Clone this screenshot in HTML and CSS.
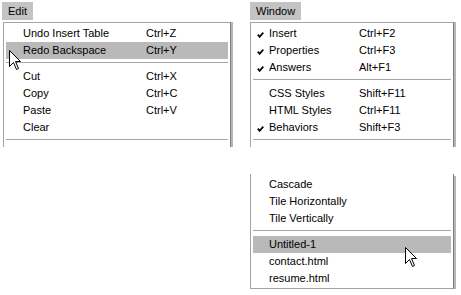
FILE: index.html
```html
<!DOCTYPE html>
<html lang="en">
<head>
    <meta charset="UTF-8">
    <title>Edit and Window menus</title>
    <link rel="stylesheet" href="styles.css">
</head>
<body>
    <div class="menu-column edit-column">
        <div class="menu-tab">Edit</div>
        <div class="menu edit-menu cut-off">
            <div class="item"><span>Undo Insert Table</span><span>Ctrl+Z</span></div>
            <div class="item active">
                <span>Redo Backspace</span><span>Ctrl+Y</span>
                <svg class="pointer edit-pointer" width="14" height="22" viewBox="0 0 14 22">
                    <path d="M0.5 0.5 L0.5 16.5 L4.5 12.5 L7.5 19.5 L9.5 18.5 L6.5 11.5 L11.5 11.5 Z" fill="#fff" stroke="#000" stroke-width="1"/>
                </svg>
            </div>
            <div class="separator"></div>
            <div class="item"><span>Cut</span><span>Ctrl+X</span></div>
            <div class="item"><span>Copy</span><span>Ctrl+C</span></div>
            <div class="item"><span>Paste</span><span>Ctrl+V</span></div>
            <div class="item"><span>Clear</span><span></span></div>
            <div class="separator"></div>
        </div>
    </div>

    <div class="menu-column window-column">
        <div class="menu-tab">Window</div>
        <div class="menu window-menu cut-off">
            <div class="item">
                <svg class="check" width="7" height="6" viewBox="0 0 7 6"><path d="M0.8 2.6 L2.6 4.8 L6.3 0.6" fill="none" stroke="#000" stroke-width="1.7"/></svg>
                <span>Insert</span><span>Ctrl+F2</span>
            </div>
            <div class="item">
                <svg class="check" width="7" height="6" viewBox="0 0 7 6"><path d="M0.8 2.6 L2.6 4.8 L6.3 0.6" fill="none" stroke="#000" stroke-width="1.7"/></svg>
                <span>Properties</span><span>Ctrl+F3</span>
            </div>
            <div class="item">
                <svg class="check" width="7" height="6" viewBox="0 0 7 6"><path d="M0.8 2.6 L2.6 4.8 L6.3 0.6" fill="none" stroke="#000" stroke-width="1.7"/></svg>
                <span>Answers</span><span>Alt+F1</span>
            </div>
            <div class="separator"></div>
            <div class="item"><span>CSS Styles</span><span>Shift+F11</span></div>
            <div class="item"><span>HTML Styles</span><span>Ctrl+F11</span></div>
            <div class="item">
                <svg class="check" width="7" height="6" viewBox="0 0 7 6"><path d="M0.8 2.6 L2.6 4.8 L6.3 0.6" fill="none" stroke="#000" stroke-width="1.7"/></svg>
                <span>Behaviors</span><span>Shift+F3</span>
            </div>
            <div class="separator"></div>
        </div>

        <div class="menu window-menu cut-top">
            <div class="item"><span>Cascade</span><span></span></div>
            <div class="item"><span>Tile Horizontally</span><span></span></div>
            <div class="item"><span>Tile Vertically</span><span></span></div>
            <div class="separator"></div>
            <div class="item active">
                <span>Untitled-1</span><span></span>
                <svg class="pointer window-pointer" width="14" height="22" viewBox="0 0 14 22">
                    <path d="M0.5 0.5 L0.5 16.5 L4.5 12.5 L7.5 19.5 L9.5 18.5 L6.5 11.5 L11.5 11.5 Z" fill="#fff" stroke="#000" stroke-width="1"/>
                </svg>
            </div>
            <div class="item"><span>contact.html</span><span></span></div>
            <div class="item"><span>resume.html</span><span></span></div>
        </div>
    </div>
</body>
</html>
```
FILE: styles.css
```css
body {
    margin: 0;
    padding: 2px 0 0 2px;
    background: #fff;
    color: #000;
    font-family: "Liberation Sans", Arial, sans-serif;
    font-size: 11px;
    display: flex;
    align-items: flex-start;
}

.edit-column {
    width: 248px;
}

.window-column {
    width: 206px;
}

.menu-tab {
    display: inline-block;
    height: 18px;
    line-height: 18px;
    padding: 0 6px;
    background: #c3c3c3;
}

.menu {
    margin-top: 2px;
    padding: 2px;
    border: 1px solid #a4a4a4;
    border-right-color: #7c7c7c;
    background: #fff;
    box-shadow: 2px 2px 0 #b6b6b6;
}

.edit-menu {
    margin-left: 1px;
    width: 228px;
    box-sizing: border-box;
}

.window-menu {
    width: 204px;
    box-sizing: border-box;
}

.cut-off {
    border-bottom: none;
    box-shadow: 2px 0 0 #b6b6b6;
}

.cut-top {
    margin-top: 27px;
    border-top: none;
    padding-bottom: 1px;
}

.item {
    position: relative;
    display: grid;
    height: 17px;
    line-height: 17px;
    padding-left: 17px;
    white-space: nowrap;
}

.edit-menu .item {
    grid-template-columns: 123px 1fr;
}

.window-menu .item {
    grid-template-columns: 90px 1fr;
    padding-left: 16px;
}

.item.active {
    background: #b9b9b9;
}

.check {
    position: absolute;
    left: 4px;
    top: 7px;
}

.separator {
    height: 1px;
    margin: 3px 0 5px;
    background: #a6a6a6;
}

.pointer {
    position: absolute;
    pointer-events: none;
}

.edit-pointer {
    left: 3px;
    top: 8px;
}

.window-pointer {
    left: 152px;
    top: 11px;
}
```
